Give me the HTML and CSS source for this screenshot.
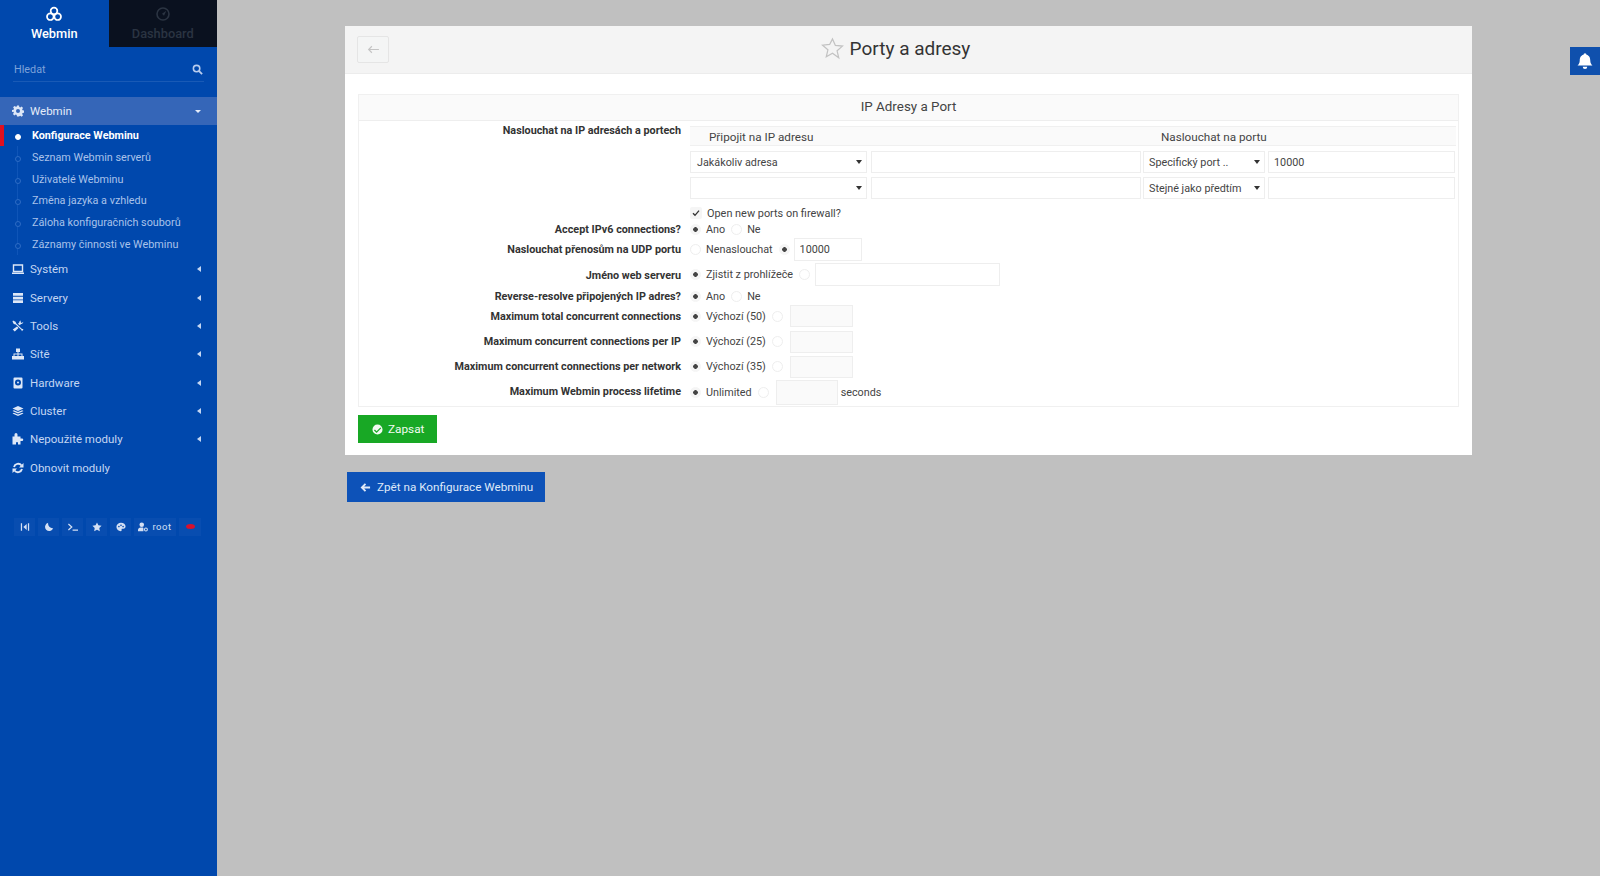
FILE: index.html
```html
<!DOCTYPE html>
<html lang="cs">
<head>
<meta charset="utf-8">
<title>Porty a adresy</title>
<link rel="stylesheet" href="styles.css">
</head>
<body>
<aside class="sidebar">
  <div class="tabs">
    <div class="tab tab-on">
      <svg class="tab-ico" viewBox="0 0 24 24"><g fill="none" stroke="currentColor" stroke-width="2.600"><circle cx="12" cy="7.500" r="5"/><circle cx="6.500" cy="16" r="5"/><circle cx="17.500" cy="16" r="5"/></g></svg>
      <span>Webmin</span>
    </div>
    <div class="tab tab-off">
      <svg class="tab-ico" viewBox="0 0 24 24"><circle cx="12" cy="12" r="9" fill="none" stroke="currentColor" stroke-width="2.400"/><path fill="currentColor" d="M17 7l-3.500 7.500-3-3z"/></svg>
      <span>Dashboard</span>
    </div>
  </div>
  <div class="search">
    <span>Hledat</span>
    <svg class="search-ico" viewBox="0 0 24 24"><circle cx="10" cy="10" r="7" fill="none" stroke="currentColor" stroke-width="3.400"/><path stroke="currentColor" stroke-width="4" d="M15 15l7 7"/></svg>
  </div>
  <nav class="menu">
    <div class="item item-on">
      <svg class="ico" viewBox="0 0 24 24"><path fill="currentColor" fill-rule="evenodd" d="M10 1h4l.6 3.200 2 .8 2.700-1.800 2.800 2.800-1.800 2.700.8 2 3.200.6v4l-3.200.6-.8 2 1.800 2.700-2.800 2.800-2.700-1.800-2 .8L14 23h-4l-.6-3.200-2-.8-2.700 1.800-2.800-2.800 1.800-2.700-.8-2L0 14v-4l3.200-.6.8-2-1.800-2.700 2.800-2.800 2.700 1.800 2-.8zM12 8a4 4 0 1 0 0 8 4 4 0 0 0 0-8z"/></svg>
      <span class="item-text">Webmin</span><i class="caret-down"></i>
    </div>
    <ul class="sub">
      <li class="sub-on">Konfigurace Webminu</li>
      <li>Seznam Webmin serverů</li>
      <li>Uživatelé Webminu</li>
      <li>Změna jazyka a vzhledu</li>
      <li>Záloha konfiguračních souborů</li>
      <li>Záznamy činnosti ve Webminu</li>
    </ul>
    <div class="item">
      <svg class="ico" viewBox="0 0 24 24"><path fill="none" stroke="currentColor" stroke-width="2.800" d="M3 4h18v13H3z"/><path fill="currentColor" d="M0 19h24v3H0z"/></svg>
      <span class="item-text">Systém</span><i class="caret-left"></i>
    </div>
    <div class="item">
      <svg class="ico" viewBox="0 0 24 24"><path fill="currentColor" d="M2 2h20v5.500H2zM2 9.300h20v5.500H2zM2 16.600h20v5.500H2z"/></svg>
      <span class="item-text">Servery</span><i class="caret-left"></i>
    </div>
    <div class="item">
      <svg class="ico" viewBox="0 0 24 24"><path fill="currentColor" d="M2 1l5 2.500 1.500 3.500 11 10.500 3.500 1-3 4-1.500-3L7.500 9 3.500 8 1 3zM23 3.500l-2.500 4-2.500.5-2.500 2.500L12 7.500 14.500 5l.5-2.500L18 1l-1 3 2 2zM10 13l3 3-7.500 7L1.500 19z"/></svg>
      <span class="item-text">Tools</span><i class="caret-left"></i>
    </div>
    <div class="item">
      <svg class="ico" viewBox="0 0 24 24"><path fill="currentColor" d="M8 1h8v7h-3v3h8v5h3v7h-8v-7h3v-3h-6v3h3v7H8v-7h3v-3H5v3h3v7H0v-7h3v-5h8V8H8z"/></svg>
      <span class="item-text">Sítě</span><i class="caret-left"></i>
    </div>
    <div class="item">
      <svg class="ico" viewBox="0 0 24 24"><path fill="currentColor" fill-rule="evenodd" d="M5 1h14a2 2 0 0 1 2 2v18a2 2 0 0 1-2 2H5a2 2 0 0 1-2-2V3a2 2 0 0 1 2-2zm7 4a6 6 0 1 0 0 12 6 6 0 0 0 0-12zm0 4a2 2 0 1 1 0 4 2 2 0 0 1 0-4z"/></svg>
      <span class="item-text">Hardware</span><i class="caret-left"></i>
    </div>
    <div class="item">
      <svg class="ico" viewBox="0 0 24 24"><path fill="currentColor" d="M12 2l11 5-11 5L1 7zM3.800 10.300l8.200 3.700 8.200-3.700 2.800 1.700-11 5-11-5zM3.800 15.300l8.200 3.700 8.200-3.700 2.800 1.700-11 5-11-5z"/></svg>
      <span class="item-text">Cluster</span><i class="caret-left"></i>
    </div>
    <div class="item">
      <svg class="ico" viewBox="0 0 24 24"><path fill="currentColor" d="M5 3a3 3 0 0 1 6 0v4h6v4h3a2.500 2.500 0 0 1 0 5h-3v7h-5v-3a2 2 0 0 0-4 0v3H1V7h4z"/></svg>
      <span class="item-text">Nepoužité moduly</span><i class="caret-left"></i>
    </div>
    <div class="item">
      <svg class="ico" viewBox="0 0 24 24"><path fill="none" stroke="currentColor" stroke-width="3.800" d="M4 10a8.500 8.500 0 0 1 15-3M20 14a8.500 8.500 0 0 1-15 3"/><path fill="currentColor" d="M23 2v9h-9zM1 22v-9h9z"/></svg>
      <span class="item-text">Obnovit moduly</span>
    </div>
  </nav>
  <div class="tools">
    <span class="tool"><svg class="tool-ico" viewBox="0 0 24 24"><path fill="currentColor" d="M2 3h3v18H2zM19 3h3v18h-3zM8 12l8-7v14z"/></svg></span>
    <span class="tool"><svg class="tool-ico" viewBox="0 0 24 24"><path fill="currentColor" d="M10 2a10 10 0 1 0 12 13A11 11 0 0 1 10 2z"/></svg></span>
    <span class="tool"><svg class="tool-ico" viewBox="0 0 24 24"><path fill="none" stroke="currentColor" stroke-width="3" d="M1 5l8 7-8 7"/><path fill="currentColor" d="M11 18h13v3H11z"/></svg></span>
    <span class="tool"><svg class="tool-ico" viewBox="0 0 24 24"><path fill="currentColor" d="M12 1l3.400 7 7.600 1-5.500 5.300L18.800 22 12 18.300 5.200 22l1.300-7.700L1 9l7.600-1z"/></svg></span>
    <span class="tool"><svg class="tool-ico" viewBox="0 0 24 24"><path fill="currentColor" fill-rule="evenodd" d="M12 2c6 0 11 4 11 9 0 3-2 5-5 5h-3c-1.500 0-2 1-1.500 2.200.6 1.600 0 3.800-2 3.800C6 22 1 17.500 1 12S6 2 12 2zM7 9a2 2 0 1 0 0 4 2 2 0 0 0 0-4zm5-3a2 2 0 1 0 0 4 2 2 0 0 0 0-4zm5 3a2 2 0 1 0 0 4 2 2 0 0 0 0-4z"/></svg></span>
    <span class="tool tool-user"><svg class="tool-ico" viewBox="0 0 24 24"><circle cx="9" cy="6.500" r="5.500" fill="currentColor"/><path fill="currentColor" d="M0 22v-3c0-4 3-6 6-6h6l1 2v7z"/><circle cx="19" cy="18" r="3.500" fill="none" stroke="currentColor" stroke-width="2.500"/></svg><span>root</span></span>
    <span class="tool tool-exit"><i class="exit-dot"></i></span>
  </div>
</aside>

<main class="main">
  <section class="panel">
    <header class="panel-head">
      <button class="back-mini" type="button"><svg class="back-ico" viewBox="0 0 24 24"><path fill="none" stroke="currentColor" stroke-width="2" d="M22 12H3M9 6l-6 6 6 6"/></svg></button>
      <h1 class="title"><svg class="star" viewBox="0 0 24 24"><path fill="none" stroke="currentColor" stroke-width="1.300" d="M12 2l3 6.800 7.400.7-5.600 4.900 1.700 7.300L12 17l-6.500 3.700 1.700-7.300-5.600-4.900 7.400-.7z"/></svg><span>Porty a adresy</span></h1>
    </header>
    <div class="panel-body">
      <div class="box">
        <div class="box-head">IP Adresy a Port</div>
        <div class="rows">
          <div class="row row-first">
            <div class="label">Naslouchat na IP adresách a portech</div>
            <div class="listen">
              <div class="listen-head"><span class="lh-a">Připojit na IP adresu</span><span class="lh-b">Naslouchat na portu</span></div>
              <div class="listen-row">
                <div class="sel sel-a"><span>Jakákoliv adresa</span><i class="sel-caret"></i></div>
                <input class="txt txt-addr" type="text">
                <div class="sel sel-b"><span>Specifický port ..</span><i class="sel-caret"></i></div>
                <input class="txt txt-port" type="text" value="10000">
              </div>
              <div class="listen-row">
                <div class="sel sel-a"><span></span><i class="sel-caret"></i></div>
                <input class="txt txt-addr" type="text">
                <div class="sel sel-b"><span>Stejné jako předtím</span><i class="sel-caret"></i></div>
                <input class="txt txt-port" type="text">
              </div>
            </div>
          </div>
          <div class="row h16 row-down">
            <div class="label"></div>
            <div class="val"><span class="check"><svg class="check-ico" viewBox="0 0 24 24"><path fill="none" stroke="currentColor" stroke-width="4" d="M3 13l6 6L21 5"/></svg></span><span class="check-text">Open new ports on firewall?</span></div>
          </div>
          <div class="row h18">
            <div class="label">Accept IPv6 connections?</div>
            <div class="val"><i class="radio on"></i><span class="opt">Ano</span><i class="radio"></i><span class="opt">Ne</span></div>
          </div>
          <div class="row h23">
            <div class="label">Naslouchat přenosům na UDP portu</div>
            <div class="val"><i class="radio"></i><span class="opt">Nenaslouchat</span><i class="radio on"></i><input class="txt txt-udp" type="text" value="10000"></div>
          </div>
          <div class="row h25 row-low">
            <div class="label">Jméno web serveru</div>
            <div class="val"><i class="radio on"></i><span class="opt">Zjistit z prohlížeče</span><i class="radio"></i><input class="txt txt-host" type="text"></div>
          </div>
          <div class="row h19 row-down">
            <div class="label">Reverse-resolve připojených IP adres?</div>
            <div class="val"><i class="radio on"></i><span class="opt">Ano</span><i class="radio"></i><span class="opt">Ne</span></div>
          </div>
          <div class="row h24 row-up">
            <div class="label">Maximum total concurrent connections</div>
            <div class="val"><i class="radio on"></i><span class="opt">Výchozí (50)</span><i class="radio"></i><input class="txt txt-off txt-num" type="text"></div>
          </div>
          <div class="row h25">
            <div class="label">Maximum concurrent connections per IP</div>
            <div class="val"><i class="radio on"></i><span class="opt">Výchozí (25)</span><i class="radio"></i><input class="txt txt-off txt-num" type="text"></div>
          </div>
          <div class="row h25">
            <div class="label">Maximum concurrent connections per network</div>
            <div class="val"><i class="radio on"></i><span class="opt">Výchozí (35)</span><i class="radio"></i><input class="txt txt-off txt-num" type="text"></div>
          </div>
          <div class="row h26 row-life">
            <div class="label">Maximum Webmin process lifetime</div>
            <div class="val"><i class="radio on"></i><span class="opt">Unlimited</span><i class="radio"></i><input class="txt txt-off txt-life" type="text"><span class="unit">seconds</span></div>
          </div>
        </div>
      </div>
      <button class="save" type="button"><svg class="btn-ico" viewBox="0 0 24 24"><path fill="currentColor" fill-rule="evenodd" d="M12 1a11 11 0 1 1 0 22 11 11 0 0 1 0-22zm6.200 6.500L10 15.700 6.300 12l-2 2 5.700 5.700L20.200 9.500z"/></svg><span>Zapsat</span></button>
    </div>
  </section>
  <button class="return" type="button"><svg class="btn-ico" viewBox="0 0 24 24"><path fill="none" stroke="currentColor" stroke-width="4" d="M22 12H5M12 4l-8 8 8 8"/></svg><span>Zpět na Konfigurace Webminu</span></button>
</main>

<div class="bell"><svg class="bell-ico" viewBox="0 0 24 24"><path fill="currentColor" d="M12 1.500a2 2 0 0 1 2 2C18 4.500 19 8 19 11c0 4 1.500 5.500 3 7H2c1.500-1.500 3-3 3-7 0-3 1-6.500 5-7.500a2 2 0 0 1 2-2zM9 19.500h6a3 3 0 0 1-6 0z"/></svg></div>
</body>
</html>
```
FILE: styles.css
```css
* { box-sizing: border-box; }
html, body { height: 100%; }
body {
  margin: 0;
  display: flex;
  overflow: hidden;
  background: #c0c0c0;
  font-family: Roboto, "Liberation Sans", sans-serif;
  color: #444;
}
i { display: block; font-style: normal; }

/* Sidebar */
.sidebar {
  width: 217px;
  flex: none;
  height: 876px;
  background: #0048ad;
  color: #c4d6f2;
  display: flex;
  flex-direction: column;
}
.tabs { display: flex; height: 47px; }
.tab {
  width: 108.5px;
  display: flex;
  flex-direction: column;
  align-items: center;
  font-size: 12.800px;
  font-weight: 500;
  padding-top: 6px;
  gap: 4px;
}
.tab-on { color: #fff; }
.tab-off { background: #0a111f; color: #2b3442; }
.tab-ico { width: 16px; height: 16px; }
.search {
  margin: 11px 13px 0;
  height: 24px;
  display: flex;
  align-items: center;
  justify-content: space-between;
  padding: 0 1px 0 1px;
  border-bottom: 1px solid #195ab6;
  font-size: 10.800px;
  color: #7ea2d9;
}
.search-ico { width: 11px; height: 11px; color: #b9cdee; }
.menu { margin-top: 15px; }
.item {
  height: 28.300px;
  display: flex;
  align-items: center;
  padding: 0 16px 0 12px;
  font-size: 11.500px;
}
.item-on { background: #3566b8; color: #e4ecf9; }
.item-text { flex: 1; margin-left: 6px; }
.ico { width: 12px; height: 12px; color: #dde7f7; }
.caret-left {
  width: 0; height: 0;
  border-top: 3px solid transparent;
  border-bottom: 3px solid transparent;
  border-right: 4px solid #c4d6f2;
}
.caret-down {
  width: 0; height: 0;
  border-left: 3.500px solid transparent;
  border-right: 3.500px solid transparent;
  border-top: 3.500px solid #e4ecf9;
}
.sub {
  list-style: none;
  margin: 0;
  padding: 0;
  position: relative;
  height: 130px;
}
.sub::before {
  content: "";
  position: absolute;
  left: 17px;
  top: 21px;
  bottom: 0;
  width: 1px;
  background: #0f55b8;
}
.sub li {
  position: relative;
  height: 21.700px;
  line-height: 21.700px;
  padding-left: 32px;
  font-size: 10.800px;
  color: #a9c2ea;
}
.sub li::before {
  content: "";
  position: absolute;
  left: 15px;
  top: 9px;
  width: 4px;
  height: 4px;
  border-radius: 50%;
  border: 1px solid #2e6cc4;
  background: #0048ad;
}
.sub li.sub-on { color: #fff; font-weight: 700; }
.sub li.sub-on::before { background: #fff; border-color: #fff; }
.sub li.sub-on::after {
  content: "";
  position: absolute;
  left: 0;
  top: 0;
  width: 4px;
  height: 21px;
  background: #e0101f;
}
.tools {
  margin: 36px 0 0 14px;
  width: 187px;
  height: 18px;
  display: flex;
  gap: 3px;
  color: #d4e0f4;
  font-size: 9.500px;
}
.tool {
  flex: none;
  width: 21px;
  height: 18px;
  display: flex;
  align-items: center;
  justify-content: center;
  gap: 4px;
  background: #084db0;
}
.tool-user { width: 42px; letter-spacing: .5px; }
.tool-exit { width: 22px; }
.tool-ico { width: 10px; height: 10px; }
.exit-dot { width: 9px; height: 5px; border-radius: 50%; background: #d6112e; }

/* Main */
.main {
  flex: 1;
  padding: 26px 128px 0;
  display: flex;
  flex-direction: column;
  align-items: flex-start;
}
.panel {
  width: 1127px;
  height: 429px;
  background: #fff;
}
.panel-head {
  height: 48px;
  background: #f4f4f4;
  border-bottom: 1px solid #ececec;
  display: flex;
  align-items: center;
  padding: 0 12px;
  position: relative;
}
.back-mini {
  width: 32px;
  height: 27px;
  margin: 0;
  padding: 0;
  background: #f4f5f5;
  border: 1px solid #e5e5e5;
  border-radius: 2px;
  color: #c4c4c4;
  display: flex;
  align-items: center;
  justify-content: center;
}
.back-ico { width: 13px; height: 13px; }
.title {
  flex: 1;
  margin: 0 0 2px -32px;
  font-size: 19px;
  font-weight: 400;
  color: #333;
  display: flex;
  justify-content: center;
  align-items: center;
  gap: 6px;
  padding-right: 26px;
}
.star { width: 23px; height: 23px; color: #c2c2c2; }
.panel-body { padding: 20px 13px 0; }
.box {
  width: 1101px;
  border: 1px solid #f0f0f0;
  height: 313px;
}
.box-head {
  height: 26px;
  background: #fafafa;
  border-bottom: 1px solid #eee;
  text-align: center;
  font-size: 13.400px;
  line-height: 23px;
  color: #444;
}
.rows { padding-top: 5px; }
.row {
  display: grid;
  grid-template-columns: 322px 1fr;
  column-gap: 9px;
  align-items: center;
}
.row-first { height: 78px; align-items: start; }
.row-low { align-items: end; }
.row-down { padding-top: 2px; }
.row-up { padding-bottom: 2px; }
.h16 { height: 16px; }
.h18 { height: 18px; }
.h19 { height: 19px; }
.h23 { height: 23px; }
.h24 { height: 24px; }
.h25 { height: 25px; }
.h26 { height: 26px; }
.label {
  text-align: right;
  font-size: 10.800px;
  font-weight: 700;
  color: #333;
  line-height: 14px;
  padding-top: 1px;
}
.row-first .label { padding-top: 0; margin-top: -2px; }
.row-low .label { padding-bottom: 3px; }
.row-life .label { padding-top: 0; margin-top: -1px; }
.val {
  display: flex;
  align-items: center;
  font-size: 10.800px;
  padding-left: 0;
}
.listen { width: 766px; }
.listen-head {
  height: 20px;
  margin-bottom: 5px;
  background: #fafafa;
  border-top: 1px solid #f0f0f0;
  border-bottom: 1px solid #f0f0f0;
  font-size: 11.700px;
  line-height: 20px;
  color: #444;
  display: flex;
}
.lh-a { width: 471px; padding-left: 19px; }
.listen-row { display: flex; gap: 3px; margin-bottom: 4px; height: 22px; }
.listen-row .sel-a { margin-right: 1px; }
.listen-row .sel-b { margin-left: -1px; padding-left: 5px; }
.sel {
  height: 22px;
  border: 1px solid #eee;
  display: flex;
  align-items: center;
  justify-content: space-between;
  font-size: 10.800px;
  color: #444;
  padding: 0 4px 0 6px;
  background: #fff;
}
.sel-a { width: 177px; }
.sel-b { width: 122px; }
.sel-caret {
  width: 0; height: 0;
  border-left: 3px solid transparent;
  border-right: 3px solid transparent;
  border-top: 4px solid #333;
}
.txt {
  height: 22px;
  border: 1px solid #eee;
  background: #fff;
  font: 10.800px Roboto, "Liberation Sans", sans-serif;
  color: #444;
  padding: 0 5px;
  margin: 0;
  outline: 0;
}
.txt-addr { width: 270px; }
.txt-port { width: 187px; }
.txt-udp { width: 68px; height: 23px; margin-left: 4px; }
.txt-host { width: 185px; height: 23px; margin-left: 5px; }
.txt-off { background: #fafafa; }
.txt-num { width: 63px; margin-left: 7px; }
.txt-life { width: 62px; height: 25px; margin-left: 7px; }
.check {
  width: 12px;
  height: 12px;
  margin-right: 5px;
  background: #f5f5f5;
  border-radius: 2px;
  color: #333;
  display: flex;
  align-items: center;
  justify-content: center;
}
.check-ico { width: 8px; height: 8px; }
.check-text { font-size: 10.900px; }
.radio {
  flex: none;
  width: 11px;
  height: 11px;
  border-radius: 50%;
  border: 1px solid #eee;
  background: #fff;
}
.radio.on {
  background: radial-gradient(circle, #444 0 2px, #f5f5f5 2.600px);
  border-color: #f5f5f5;
}
.opt { margin: 0 6px 0 5px; }
.unit { margin-left: 3px; }
.save {
  display: flex;
  align-items: center;
  gap: 5px;
  width: 79px;
  height: 28px;
  margin: 8px 0 0;
  padding: 0 0 0 14px;
  border: 0;
  background: #18a825;
  color: #f2fbf2;
  font: 11.800px Roboto, "Liberation Sans", sans-serif;
}
.btn-ico { width: 11px; height: 11px; flex: none; }
.return {
  display: flex;
  align-items: center;
  gap: 6px;
  width: 198px;
  height: 30px;
  margin: 17px 0 0 2px;
  padding: 0 0 0 13px;
  border: 0;
  background: #0d52b8;
  color: #dfe9f8;
  font: 11.700px Roboto, "Liberation Sans", sans-serif;
}
.bell {
  position: absolute;
  right: 0;
  top: 47px;
  width: 30px;
  height: 28px;
  background: #0f50ad;
  color: #fff;
  display: flex;
  align-items: center;
  justify-content: center;
}
.bell-ico { width: 18px; height: 18px; }
```
